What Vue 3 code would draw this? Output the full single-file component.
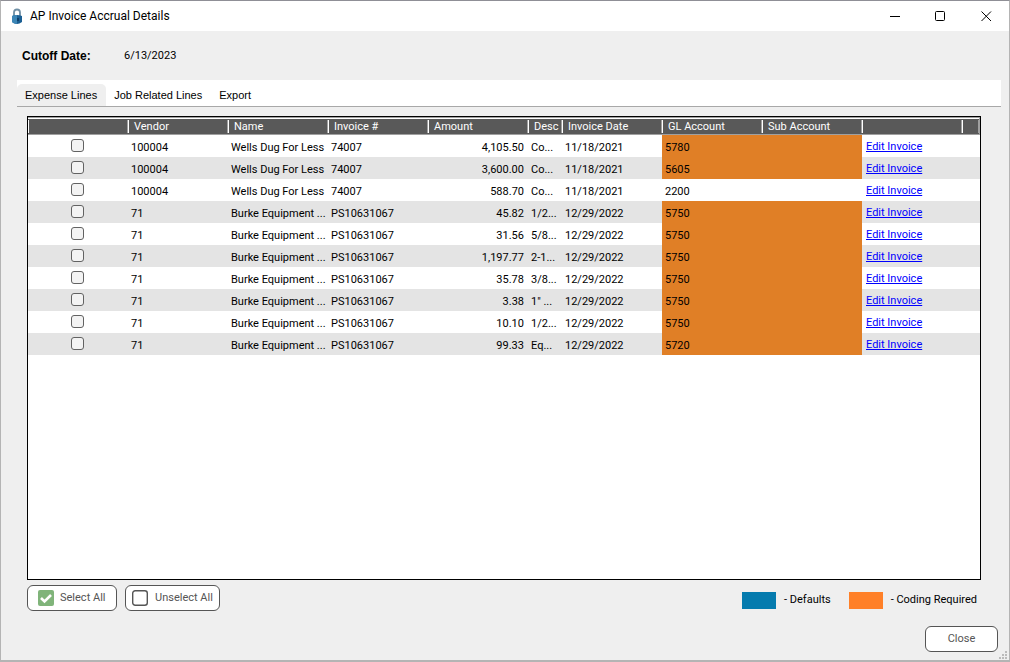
<script setup>
import { ref } from 'vue'

const tabs = ['Expense Lines', 'Job Related Lines', 'Export']
const activeTab = ref('Expense Lines')

const rows = ref([
  ['100004', 'Wells Dug For Less', '74007', '4,105.50', 'Co...', '11/18/2021', '5780', true],
  ['100004', 'Wells Dug For Less', '74007', '3,600.00', 'Co...', '11/18/2021', '5605', true],
  ['100004', 'Wells Dug For Less', '74007', '588.70', 'Co...', '11/18/2021', '2200', false],
  ['71', 'Burke Equipment ...', 'PS10631067', '45.82', '1/2...', '12/29/2022', '5750', true],
  ['71', 'Burke Equipment ...', 'PS10631067', '31.56', '5/8...', '12/29/2022', '5750', true],
  ['71', 'Burke Equipment ...', 'PS10631067', '1,197.77', '2-1...', '12/29/2022', '5750', true],
  ['71', 'Burke Equipment ...', 'PS10631067', '35.78', '3/8...', '12/29/2022', '5750', true],
  ['71', 'Burke Equipment ...', 'PS10631067', '3.38', '1" ...', '12/29/2022', '5750', true],
  ['71', 'Burke Equipment ...', 'PS10631067', '10.10', '1/2...', '12/29/2022', '5750', true],
  ['71', 'Burke Equipment ...', 'PS10631067', '99.33', 'Eq...', '12/29/2022', '5720', true]
].map(([vendor, name, invoice, amount, desc, date, gl, coding]) => ({
  vendor, name, invoice, amount, desc, date, gl, coding, selected: false
})))

function setAll(value) {
  rows.value.forEach((row) => { row.selected = value })
}
</script>

<template>
  <div class="window">
    <header class="titlebar">
      <svg class="lock" viewBox="0 0 12 17" aria-hidden="true">
        <path d="M3 9V4.500Q3 1.500 6 1.500T9 4.500V9" fill="none" stroke="#6f8fa5" stroke-width="1.800" />
        <path d="M1 8Q6 6 11 8V14Q6 18 1 14Z" fill="#1b5f93" />
        <path d="M1 8Q3 6.500 6 7V16Q2 15.500 1 14Z" fill="#3c86b6" />
        <path d="M7 10V13" stroke="#0d3f6b" stroke-width="2" />
      </svg>
      <h1>AP Invoice Accrual Details</h1>
      <div class="controls">
        <button type="button" aria-label="Minimize">
          <svg viewBox="0 0 11 11"><path d="M1 5.500H11" /></svg>
        </button>
        <button type="button" aria-label="Maximize">
          <svg viewBox="0 0 11 11"><rect x="0.500" y="0.500" width="9" height="9" rx="1" /></svg>
        </button>
        <button type="button" aria-label="Close window">
          <svg viewBox="0 0 11 11"><path d="M0.500 0.500L10 10M10 0.500L0.500 10" /></svg>
        </button>
      </div>
    </header>

    <main class="content">
      <dl class="cutoff">
        <dt>Cutoff Date:</dt>
        <dd>6/13/2023</dd>
      </dl>

      <div class="tabs" role="tablist">
        <button
          v-for="tab in tabs" :key="tab" type="button" role="tab"
          :aria-selected="activeTab === tab" :class="{ active: activeTab === tab }"
          @click="activeTab = tab"
        >{{ tab }}</button>
      </div>

      <section class="grid">
        <table>
          <colgroup>
            <col class="std"><col class="std"><col class="std"><col class="std"><col class="std">
            <col class="desc"><col class="std"><col class="std"><col class="std"><col class="std"><col>
          </colgroup>
          <thead>
            <tr>
              <th></th><th>Vendor</th><th>Name</th><th>Invoice #</th><th>Amount</th><th>Desc</th>
              <th>Invoice Date</th><th>GL Account</th><th>Sub Account</th><th></th><th></th>
            </tr>
          </thead>
          <tbody>
            <tr v-for="(row, i) in rows" :key="i">
              <td class="pick"><input v-model="row.selected" type="checkbox" :aria-label="`Select line ${i + 1}`"></td>
              <td>{{ row.vendor }}</td>
              <td>{{ row.name }}</td>
              <td>{{ row.invoice }}</td>
              <td class="amount">{{ row.amount }}</td>
              <td>{{ row.desc }}</td>
              <td>{{ row.date }}</td>
              <td :class="{ coding: row.coding }">{{ row.gl }}</td>
              <td :class="{ coding: row.coding }"></td>
              <td class="edit"><a href="#">Edit Invoice</a></td>
              <td></td>
            </tr>
          </tbody>
        </table>
      </section>

      <div class="actions">
        <button type="button" class="btn select" @click="setAll(true)">
          <svg viewBox="0 0 16 16" aria-hidden="true">
            <rect width="16" height="16" rx="2" fill="#80b47a" />
            <path d="M3 8L6.500 11.500L13 5" fill="none" stroke="#fff" stroke-width="2.600" />
          </svg>
          Select All
        </button>
        <button type="button" class="btn unselect" @click="setAll(false)">
          <svg viewBox="0 0 16 16" aria-hidden="true">
            <rect x="0.700" y="0.700" width="14.600" height="14.600" rx="2.500" fill="#fff" stroke="#555" stroke-width="1.400" />
          </svg>
          Unselect All
        </button>
        <ul class="legend">
          <li><i class="defaults"></i>- Defaults</li>
          <li><i class="required"></i>- Coding Required</li>
        </ul>
      </div>

      <footer><button type="button" class="btn close">Close</button></footer>
    </main>

    <svg class="grip" viewBox="0 0 8 8" aria-hidden="true">
      <path d="M6 0h2v2h-2zM3 3h2v2h-2zM6 3h2v2h-2zM0 6h2v2h-2zM3 6h2v2h-2zM6 6h2v2h-2z" fill="#bbb" />
    </svg>
  </div>
</template>

<style>
body {
  background: #efefef;
}
</style>

<style scoped>
* {
  box-sizing: border-box;
}

.window {
  position: relative;
  display: flex;
  flex-direction: column;
  min-height: 100vh;
  border: 1px solid #b4b4b4;
  border-top-color: #8f8f96;
  border-bottom: 2px solid #b4b4b4;
  background: #efefef;
  color: #000;
  font: 11px/14px Roboto, "Liberation Sans", sans-serif;
}

button {
  font: inherit;
  color: inherit;
  cursor: pointer;
}

.titlebar {
  display: flex;
  align-items: center;
  height: 30px;
  padding-left: 10px;
  background: #fff;
}

.lock {
  width: 12px;
  height: 17px;
}

h1 {
  margin: 0 0 0 7px;
  font-size: 12px;
  font-weight: normal;
  line-height: 16px;
}

.controls {
  display: flex;
  height: 100%;
  margin-left: auto;
}

.controls button {
  display: grid;
  place-items: center;
  width: 46px;
  padding: 0;
  border: 0;
  background: none;
}

.controls svg {
  width: 11px;
  height: 11px;
  fill: none;
  stroke: #000;
}

.content {
  display: flex;
  flex: 1;
  flex-direction: column;
  padding: 18px 8px 8px 16px;
}

.cutoff {
  display: flex;
  margin: 0 0 17px 5px;
}

dt {
  width: 102px;
  font: bold 12px/14px "Liberation Sans", Arial, sans-serif;
}

dd {
  margin: 0;
}

.tabs {
  display: flex;
  align-items: flex-end;
  height: 27px;
  border-bottom: 1px solid #a8a8a8;
  background: #fff;
}

.tabs button {
  height: 22px;
  padding: 0 9px 0 8px;
  border: 0;
  border-radius: 5px 5px 0 0;
  background: none;
  font: 11px/14px "Liberation Sans", Arial, sans-serif;
}

.tabs button.active {
  background: #efefef;
}

.grid {
  flex: 1;
  margin: 9px 20px 0 10px;
  border: 1px solid #000;
  background: #fff;
}

table {
  width: 100%;
  border-collapse: separate;
  border-spacing: 0;
  table-layout: fixed;
}

.std {
  width: 100px;
}

.desc {
  width: 34px;
}

th {
  height: 18px;
  padding: 2px 0 0 6px;
  border: solid #a0a0a0;
  border-width: 1px 0;
  background:
    linear-gradient(#fff, #fff) 0 2px / 1px 13px no-repeat,
    linear-gradient(#a0a0a0, #a0a0a0) 100% 2px / 1px 13px no-repeat,
    #595959;
  box-shadow: inset 0 1px #fff;
  color: #fff;
  font-weight: normal;
  line-height: 14px;
  text-align: left;
  white-space: nowrap;
}

th:last-child {
  border-right: 1px solid #a0a0a0;
}

td {
  height: 22px;
  padding: 4px 3px 0;
  white-space: nowrap;
}

tbody tr:nth-child(even) {
  background: #e4e4e4;
}

.pick {
  padding: 0 2px 2px 0;
}

.pick input {
  display: block;
  width: 13px;
  height: 13px;
  margin: 0 auto;
  border: 1px solid #626262;
  border-radius: 3px;
  background: #f3f3f3;
  appearance: none;
}

.pick input:checked {
  background: #0067c0;
}

.amount {
  padding-right: 4px;
  text-align: right;
}

.coding {
  background: #e07f26;
}

.edit {
  padding: 2px 4px 0;
}

a {
  color: #00f;
}

.actions {
  display: flex;
  align-items: center;
  margin: 5px 24px 0 10px;
}

.btn {
  display: flex;
  align-items: center;
  height: 26px;
  padding: 0 8px;
  border: 1px solid #555;
  border-radius: 6px;
  background: #fff;
  color: #555;
  white-space: nowrap;
}

.btn svg {
  flex: none;
  width: 16px;
  height: 16px;
}

.select {
  gap: 6px;
  width: 90px;
  padding: 0 10px;
}

.unselect {
  gap: 7px;
  width: 95px;
  margin-left: 8px;
  padding: 0 6px;
}

.legend {
  display: flex;
  gap: 18px;
  margin: 4px 0 0 auto;
  padding: 0;
  list-style: none;
}

li {
  display: flex;
  align-items: center;
  white-space: nowrap;
}

i {
  width: 34px;
  height: 17px;
  margin-right: 8px;
}

.defaults {
  background: #057bae;
}

.required {
  background: #ff8028;
}

footer {
  display: flex;
  justify-content: flex-end;
  margin: 15px 3px 0 0;
}

.close {
  justify-content: center;
  width: 73px;
}

.grip {
  position: absolute;
  right: 2px;
  bottom: 1px;
  width: 8px;
  height: 8px;
}
</style>
